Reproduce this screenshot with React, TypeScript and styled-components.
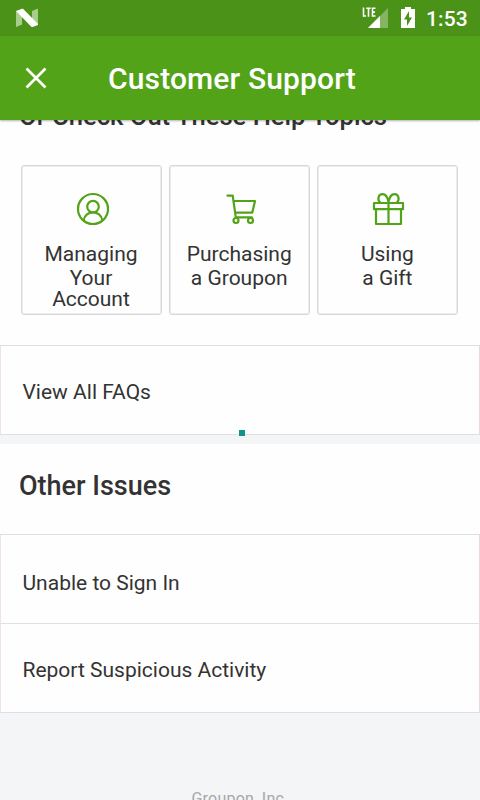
import React from "react";
import styled, { createGlobalStyle } from "styled-components";

const GlobalStyle = createGlobalStyle`
  * { box-sizing: border-box; }
  body { margin: 0; background: #f4f5f7; overflow: hidden; }
`;

const Screen = styled.div`
  width: 480px;
  height: 800px;
  overflow: hidden;
  display: flex;
  flex-direction: column;
  background: #f4f5f7;
  color: #333333;
  font-family: Roboto, "Liberation Sans", sans-serif;
`;

const StatusBar = styled.div`
  flex: none;
  height: 36px;
  padding: 0 12px 0 15px;
  display: flex;
  align-items: center;
  background: #4b9218;
  color: #fff;
`;

const StatusIcons = styled.div`
  margin-left: auto;
  display: flex;
  align-items: center;
`;

const Clock = styled.time`
  margin: 1px 0 0 11px;
  font-size: 21px;
  line-height: 24px;
  font-weight: 500;
  letter-spacing: 0.1px;
  width: 42px;
  white-space: nowrap;
`;

const AppBar = styled.header`
  flex: none;
  height: 84px;
  padding-left: 24px;
  display: flex;
  align-items: center;
  background: #53a318;
  color: #fff;
  box-shadow: 0 1px 2px rgba(0, 0, 0, 0.3);
  z-index: 1;
`;

const Title = styled.h1`
  margin: 2px 0 0 60px;
  font-size: 30px;
  line-height: 36px;
  font-weight: 500;
  letter-spacing: 0.14px;
`;

const CloseButton = styled.button`
  width: 24px;
  height: 24px;
  padding: 0;
  border: 0;
  background: none;
  color: inherit;
`;

const Content = styled.main`
  flex: 1;
  min-height: 0;
  overflow: hidden;
`;

const TopicsPanel = styled.section`
  height: 225px;
  background: #fefefe;
`;

const TopicsHeading = styled.h2`
  margin: 0;
  height: 45px;
  padding-left: 19px;
  font-size: 25.6px;
  line-height: 30px;
  font-weight: 500;
  white-space: nowrap;

  span {
    display: block;
    margin-top: -19px;
  }
`;

const IssuesHeading = styled.h2`
  margin: 0;
  height: 90px;
  padding: 26px 0 0 19px;
  background: #fefefe;
  font-size: 27px;
  line-height: 32px;
  font-weight: 500;
`;

const ClippedTop = styled.div`
  display: flow-root;
  height: 45px;
`;

const Cards = styled.div`
  display: grid;
  grid-template-columns: 141px 141px 141px;
  column-gap: 7.2px;
  padding-left: 21px;
`;

const Card = styled.div`
  height: 150px;
  border: 1px solid #d8d8da;
  box-shadow: inset 0 0 0 1px #ececee;
  border-radius: 3px;
  background: #fefefe;
  display: flex;
  flex-direction: column;
  align-items: center;
  padding-top: 25px;
`;

const CardLabel = styled.div`
  margin: 17px 1px 0 0;
  display: flex;
  flex-direction: column;
  align-items: center;
  font-size: 21px;
  line-height: 21px;
`;

const LabelLine = styled.span`
  white-space: nowrap;

  &:first-child {
    margin-bottom: 3px;
  }
`;

const LinkRow = styled.div<{ $height: number; $offset?: number }>`
  height: ${(p) => p.$height}px;
  border: 1px solid #e0e0e2;
  border-left-color: #f0e2e5;
  border-right-color: #ead8dc;
  background: #fefefe;
  display: flex;
  align-items: center;
  padding: ${(p) => p.$offset ?? 3}px 0 0 21.5px;
  font-size: 21px;
  line-height: 24px;

  & + & { border-top: 0; }
`;

const Divider = styled.div`
  position: relative;
  height: 9px;
  background: #f4f5f6;
`;

const Marker = styled.i`
  position: absolute;
  left: 239px;
  top: -5px;
  width: 6px;
  height: 6px;
  background: #10948a;
`;

const Footer = styled.footer`
  padding-top: 76px;
  text-align: center;
  font-size: 16px;
  line-height: 20px;
  letter-spacing: 0.25px;
  color: #a6a7a9;
`;

const LineIcon = ({ children }: { children: React.ReactNode }) => (
  <svg width="36" height="36" viewBox="0 0 36 36" fill="none" stroke="#53a318" strokeWidth="2.2" strokeLinecap="round" strokeLinejoin="round">
    {children}
  </svg>
);

const cards = [
  {
    lines: ["Managing", "Your", "Account"],
    icon: (
      <>
        <circle cx="19" cy="18" r="15" />
        <circle cx="19" cy="15.7" r="5.8" />
        <path d="M9.700 29.300C11 18.700 27 18.700 28.300 29.300" />
      </>
    ),
  },
  {
    lines: ["Purchasing", "a Groupon"],
    icon: (
      <>
        <path d="M5.500 4.700h5.200l3.100 21.600M11.800 10H33l-2.700 11.600H13.300M13.800 26.300h16" />
        <circle cx="14" cy="29.500" r="2.500" />
        <circle cx="28.500" cy="29.500" r="2.500" />
      </>
    ),
  },
  {
    lines: ["Using", "a Gift"],
    icon: (
      <>
        <path d="M4 12h29v6.200H4zM6 18.200V33h25V18.200M18.500 12v21" />
        <path d="M18.500 11.700C17.800 7 15.800 3.200 12.500 3.200C8.300 3.200 7 8.500 10.200 11.500M18.500 11.700C19.200 7 21.200 3.200 24.500 3.200C28.700 3.200 30 8.500 26.800 11.500" />
      </>
    ),
  },
];

export default function App() {
  return (
    <Screen>
      <GlobalStyle />
      <StatusBar>
        <svg width="24" height="20" viewBox="0 0 24 20">
          <path d="M1 3v16l6-2.500V3zM17 3l6-2.500V17l-6-3z" fill="#a8ce8c" />
          <path d="M1 3l6-2.300h1L23 16v1l-5.500 2h-1z" fill="#fff" />
        </svg>
        <StatusIcons>
          <svg width="28" height="24" viewBox="0 0 28 24">
            <path d="M27 2v20H7z" fill="#85b563" />
            <path d="M1 1h16v10H1z" fill="#4b9218" />
            <path d="M19 10v12H7z" fill="#fff" />
            <path d="M2.500 1.500v8.500H5M5.300 2.200H9.700M7.500 2.200V10.800M14.500 2.200h-3V10h3M11.500 6.100h2.500" fill="none" stroke="#fff" strokeWidth="1.6" />
          </svg>
          <svg width="26" height="24" viewBox="0 0 26 24">
            <path d="M12 3h4V1h6v2h4v19H12z" fill="#fff" />
            <path d="M20 5l-5 8.500h3V20l5-8.500h-3z" fill="#4b9218" />
          </svg>
          <Clock>1:53</Clock>
        </StatusIcons>
      </StatusBar>
      <AppBar>
        <CloseButton aria-label="Close">
          <svg width="24" height="24" viewBox="0 0 24 24" fill="none" stroke="#fff" strokeWidth="2.7">
            <path d="M2.500 2.500l19 19M21.500 2.500l-19 19" />
          </svg>
        </CloseButton>
        <Title>Customer Support</Title>
      </AppBar>
      <Content>
        <TopicsPanel>
          <ClippedTop>
            <TopicsHeading>
              <span>Or Check Out These Help Topics</span>
            </TopicsHeading>
          </ClippedTop>
          <Cards>
            {cards.map((card) => (
              <Card key={card.lines[0]}>
                <LineIcon>{card.icon}</LineIcon>
                <CardLabel>
                  {card.lines.map((line) => (
                    <LabelLine key={line}>{line}</LabelLine>
                  ))}
                </CardLabel>
              </Card>
            ))}
          </Cards>
        </TopicsPanel>
        <LinkRow $height={90}>View All FAQs</LinkRow>
        <Divider><Marker /></Divider>
        <IssuesHeading>Other Issues</IssuesHeading>
        <LinkRow $height={90} $offset={7}>Unable to Sign In</LinkRow>
        <LinkRow $height={89}>Report Suspicious Activity</LinkRow>
        <Footer>Groupon, Inc.</Footer>
      </Content>
    </Screen>
  );
}
